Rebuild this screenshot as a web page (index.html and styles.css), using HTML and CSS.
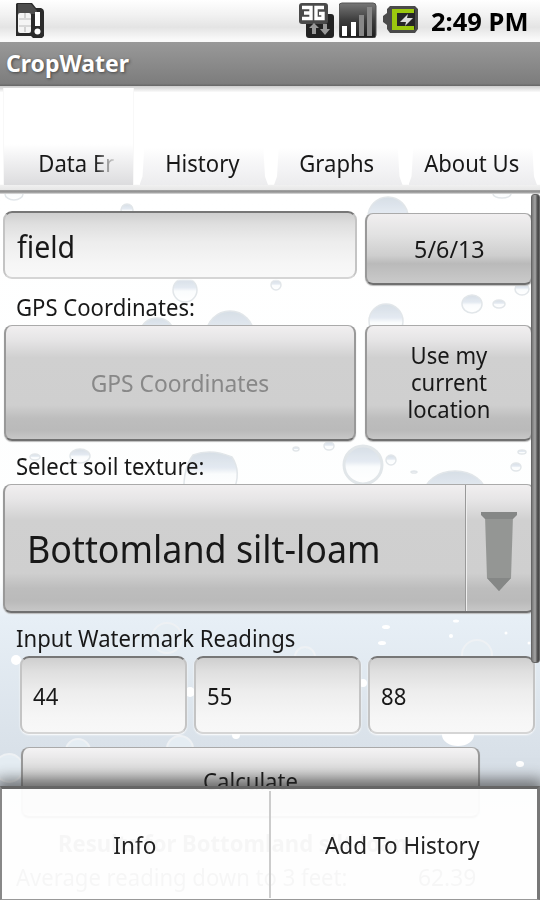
FILE: index.html
```html
<!DOCTYPE html>
<html lang="en">
<head>
<meta charset="utf-8">
<title>CropWater</title>
<link rel="stylesheet" href="styles.css">
</head>
<body>
<div class="screen">
  <header class="status">
    <svg class="sim" width="34" height="38" viewBox="0 0 34 38">
      <path d="M3 3h15l4 5h5q3 1 3 4v24l-2 2H19l-2-2H2V4z" fill="#2b2b2b"/>
      <path d="M4 4h13l6 7v3H4z" fill="#4d4d4d"/>
      <rect x="4" y="13" width="13" height="20" rx="2" fill="#f4f4f4"/>
      <path d="M5 19h12M5 26h12M11 13v5M11 27v5" stroke="#bbb" stroke-width="1.2"/>
      <path d="M21 12h5v14h-5z" fill="#fff"/><circle cx="23.500" cy="31.500" r="3" fill="#fff"/>
    </svg>
    <div class="status-icons">
      <svg width="38" height="38" viewBox="0 0 38 38">
        <rect x="8" y="14" width="28" height="24" rx="3" fill="#222"/>
        <rect x="1" y="3" width="29" height="21" rx="3" fill="#4a4a4a"/>
        <path d="M4 7.500h9v11H4M6 13h6M26 7.500h-8v11h7v-5h-4" fill="none" stroke="#fff" stroke-width="3.400"/>
        <path d="M14 34v-6h-3l5-5 5 5h-3v6zM25 24v5h-3l5 6 5-6h-3v-5z" fill="#999"/>
      </svg>
      <svg width="40" height="38" viewBox="0 0 40 38">
        <defs><linearGradient id="sig" x2="0" y2="1"><stop stop-color="#777"/><stop offset=".5" stop-color="#3c3c3c"/><stop offset="1" stop-color="#1c1c1c"/></linearGradient></defs>
        <rect x="0" y="3" width="37" height="35" rx="3" fill="url(#sig)" stroke="#555"/>
        <path d="M3 26h5v10H3zM12 22h5v14h-5z" fill="#fff"/>
        <path d="M20 15h5v21h-5zM28 7h5v29h-5z" fill="#888"/>
      </svg>
      <svg width="38" height="38" viewBox="0 0 38 38">
        <path d="M8 6h25l3 3v20l-3 4H8l-3-4v-4l-4-3v-6l4-3V9z" fill="#4a4a4a"/>
        <path d="M10 9h21q2 0 2 2v17q0 2-2 2H10z" fill="#262626"/>
        <path d="M10 9h22v4H15v13h17v4H10z" fill="#9bc80e"/>
        <path d="M18 22l8-8-1 4h6l-8 8 1-4z" fill="#ddd"/>
      </svg>
      <span class="clock"><span class="t t-clock">2:49 PM</span></span>
    </div>
  </header>
  <div class="title"><span class="t t-title">CropWater</span></div>
  <nav class="tabs">
    <div class="tab active"><span class="t fade">Data Er</span></div>
    <div class="tab"><span class="t">History</span></div>
    <div class="tab"><span class="t">Graphs</span></div>
    <div class="tab"><span class="t">About Us</span></div>
  </nav>
  <main class="content">
    <svg class="drops" width="540" height="706" viewBox="0 194 540 706">
      <defs>
        <linearGradient id="sky" x2="0" y2="1"><stop stop-color="#fff"/><stop offset=".55" stop-color="#fdfefe"/><stop offset=".6" stop-color="#e7eff6"/><stop offset=".8" stop-color="#d8e0e8"/><stop offset="1" stop-color="#e3e7eb"/></linearGradient>
        <linearGradient id="drop" x2="0" y2="1"><stop stop-color="#d0d9e2"/><stop offset=".4" stop-color="#e0e7f0"/><stop offset=".55" stop-color="#fafcfd"/><stop offset="1" stop-color="#fff"/></linearGradient>
      </defs>
      <rect y="194" width="540" height="706" fill="url(#sky)"/>
      <g class="drop-group" fill="url(#drop)" stroke="#dde2e6" stroke-width="1.500">
        <circle cx="388" cy="217" r="20"/><ellipse cx="14" cy="194" rx="9" ry="6"/><circle cx="127" cy="210" r="6"/><ellipse cx="502" cy="194" rx="9" ry="4"/>
        <circle cx="185" cy="290" r="12"/><circle cx="276" cy="285" r="5"/><circle cx="230" cy="335" r="24"/><ellipse cx="157" cy="331" rx="16" ry="13"/>
        <circle cx="386" cy="321" r="17"/><ellipse cx="472" cy="304" rx="10" ry="9"/><ellipse cx="499" cy="304" rx="6" ry="4"/><ellipse cx="522" cy="289" rx="7" ry="6"/>
        <path d="M193 455q18-7 39 2q10 15 1 35h-49q-1-24 9-37z"/><circle cx="363" cy="465" r="19" stroke-width="3"/><circle cx="391" cy="460" r="5"/><ellipse cx="455" cy="494" rx="31" ry="23"/><ellipse cx="516" cy="467" rx="5" ry="4"/><ellipse cx="522" cy="452" rx="4" ry="2"/><ellipse cx="329" cy="446" rx="5" ry="4"/><ellipse cx="296" cy="449" rx="3" ry="2"/><ellipse cx="414" cy="472" rx="3" ry="1"/><ellipse cx="80" cy="456" rx="10" ry="7"/><ellipse cx="35" cy="457" rx="5" ry="3"/>
      </g>
      <g fill="#e5edf3" stroke="#eef1f4" stroke-width="2">
        <circle cx="167" cy="638" r="15"/><circle cx="477" cy="655" r="15"/><circle cx="305" cy="657" r="10"/><circle cx="78" cy="751" r="12"/><circle cx="180" cy="749" r="13"/><circle cx="9" cy="768" r="14"/>
      </g>
      <g fill="#fff">
        <ellipse cx="386" cy="627" rx="4" ry="2"/><ellipse cx="382" cy="643" rx="4" ry="2"/><ellipse cx="456" cy="621" rx="3" ry="1.500"/><circle cx="451" cy="636" r="2"/><circle cx="506" cy="633" r="1.500"/><circle cx="529" cy="643" r="1.500"/><circle cx="16" cy="660" r="5"/><ellipse cx="458" cy="735" rx="16" ry="11"/><circle cx="190" cy="692" r="5"/><circle cx="363" cy="683" r="4"/><ellipse cx="520" cy="764" rx="4" ry="3"/><circle cx="236" cy="735" r="4"/>
      </g>
    </svg>
    <section class="form">
      <div class="row top-row">
        <div class="input field"><span class="t t-field">field</span></div>
        <div class="button date"><span class="t t-date">5/6/13</span></div>
      </div>
      <div class="label gps-label"><span class="t">GPS Coordinates:</span></div>
      <div class="row gps-row">
        <div class="button gps"><span class="t">GPS Coordinates</span></div>
        <div class="button locate"><span class="t">Use my<br>current<br>location</span></div>
      </div>
      <div class="label"><span class="t">Select soil texture:</span></div>
      <div class="button spinner">
        <span class="choice"><span class="t t-choice">Bottomland silt-loam</span></span>
        <span class="arrow"><svg width="38" height="80" viewBox="0 0 38 80"><path d="M5 4h28L31 66 19 79 7 66z" fill="#949694"/><path d="M1 0h36v3l-4 4H5L1 3z" fill="#858786"/><path d="M7 66h24L19 79z" fill="#858786"/></svg></span>
      </div>
      <div class="label"><span class="t">Input Watermark Readings</span></div>
      <div class="readings">
        <div class="input"><span class="t">44</span></div>
        <div class="input"><span class="t">55</span></div>
        <div class="input"><span class="t">88</span></div>
      </div>
      <div class="button calculate"><span class="t">Calculate</span></div>
      <div class="results"><span class="t">Results for Bottomland silt-loam</span></div>
      <div class="average"><span class="t">Average reading down to 3 feet:</span><span class="t t-value">62.39</span></div>
    </section>
    <div class="scrollbar"></div>
  </main>
  <div class="menu">
    <div class="item"><span class="t">Info</span></div>
    <div class="item"><span class="t">Add To History</span></div>
  </div>
</div>
</body>
</html>
```
FILE: styles.css
```css
* { box-sizing: border-box; }
body { margin: 0; font-family: "Noto Sans", "Open Sans", sans-serif; font-size: 24px; line-height: 34px; color: #181818; }
svg { display: block; flex: none; }
.screen { position: relative; width: 540px; height: 900px; overflow: hidden; background: #fff; display: flex; flex-direction: column; }
.t { display: inline-block; white-space: nowrap; transform: scaleX(.92); transform-origin: left center; }

.status { height: 42px; display: flex; justify-content: space-between; padding: 0 0 0 14px; background: linear-gradient(#fff, #f2f2f2 35%, #e4e4e4 65%, #fafafa 95%); }
.status-icons { display: flex; width: 242px; gap: 3px; }
.clock { padding: 4px 0 0 8px; color: #000; font-size: 25px; font-weight: 700; }
.t-clock { transform: scaleX(1.02); }
.title { height: 44px; padding: 4px 6px; background: linear-gradient(#999, #7d7d7d 94%, #666); color: #fff; font-size: 23px; font-weight: 700; text-shadow: 1px 1px 3px #444; }
.t-title { transform: scaleX(1); }

.tabs { height: 108px; padding: 0 3px; display: flex; gap: 6px; align-items: flex-end; background: linear-gradient(#ccc, #fff 6%, #fff 91%, #f0f0f0 92%, #e7e7e7 96%, #888 97%, #aaa 99%, #eee); }
.tab { flex: 1; height: 42px; margin-bottom: 9px; background: linear-gradient(#fff 10%, #f8f8f9 40%, #ececee); display: flex; justify-content: center; padding-top: 3px; clip-path: polygon(5px 0, calc(100% - 5px) 0, calc(100% - 3px) 80%, 100% 100%, 0 100%, 3px 80%); }
.tab .t { transform-origin: center; margin-left: -3px; }
.tab.active { height: 97px; padding-top: 58px; clip-path: none; background: linear-gradient(#fff 58%, #f4f4f5 70%, #dcdcde); border: solid #f8f8f8; border-width: 0 1px; }
.tab.active .t { margin-left: 17px; }
.fade { background: linear-gradient(90deg, #181818 74%, #ddd); -webkit-background-clip: text; background-clip: text; color: transparent; }

.content { position: relative; height: 706px; }
.drops { position: absolute; left: 0; top: 0; }
.drop-group { opacity: .85; }
.form { position: relative; padding-top: 17px; }
.row { display: flex; }
.top-row { height: 74px; gap: 8px; padding-left: 3px; }
.gps-row { height: 116px; gap: 9px; padding-left: 4px; }
.input { display: flex; align-items: center; border: 2px solid #c4c4c4; border-top-color: #777; border-bottom-color: #d5d5d5; border-radius: 9px; background: linear-gradient(#cfcfcf, #dfdfdf 18%, #ededed 45%, #f6f6f6 80%, #f8f8f8); box-shadow: 0 1px 2px #fff; }
.field { width: 354px; height: 68px; padding: 4px 0 0 12px; font-size: 30px; }
.t-field { transform: scaleX(.95); }
.button { display: flex; align-items: center; justify-content: center; border: 2px solid #999; border-top: 1px solid #aaa; border-bottom-color: #707070; border-radius: 8px; background: linear-gradient(#f1eff0, #e6e5e6 12%, #d0d0d0 28%, #cfcfcf 70%, #bdbdbd 82%, #bababa 92%, #c7c7c7); box-shadow: 0 1px 1px #bbb; }
.button .t { transform-origin: center; }
.date { width: 168px; height: 72px; margin-top: 2px; background: linear-gradient(#f1eff0, #e2e2e2 30%, #cecece 60%, #bababa 72%, #cacaca); }
.date .t-date { transform: scaleX(.97); }
.gps { width: 352px; color: #888; }
.gps .t { transform: scaleX(.95); }
.locate { width: 168px; text-align: center; line-height: 27px; padding-bottom: 2px; }
.label { height: 43px; padding: 8px 0 0 16px; }
.label .t { transform: scaleX(.92); }
.gps-label { height: 40px; padding-top: 5px; }
.spinner { width: 532px; height: 129px; margin-left: 3px; justify-content: space-between; font-size: 38px; line-height: 54px; }
.choice { padding-left: 22px; }
.spinner .t-choice { transform: scaleX(.943); transform-origin: left center; }
.arrow { width: 68px; align-self: stretch; padding: 27px 0 0 14px; border-left: 1px solid #999; box-shadow: inset 1px 0 #eee; }
.readings { display: grid; grid-template-columns: repeat(3, 167px); gap: 7px; padding-left: 20px; height: 78px; }
.readings .input { padding: 2px 0 0 11px; }
.calculate { width: 459px; height: 71px; margin: 13px 0 0 21px; padding-bottom: 2px; background: linear-gradient(#f4f3f4, #dedede 30%, #c8c8c8 60%, #bcbcbc 75%, #ccc); }
.results { height: 34px; padding-left: 58px; margin-top: 8px; font-weight: 700; color: #555; }
.average { display: flex; justify-content: space-between; padding: 0 61px 0 16px; color: #555; }
.t-value { transform: scaleX(.95); }
.scrollbar { position: absolute; right: 0; top: 0; width: 9px; height: 469px; border-radius: 3px; border: 1px solid #666; background: linear-gradient(90deg, #777, #a5a5a5 45%, #555 75%, #444); }

.menu { position: absolute; left: 0; top: 786px; width: 540px; height: 114px; display: flex; gap: 2px; padding: 2px 4px 1px 2px; background: rgba(255, 255, 255, .95); border-top: 3px solid #666; border-left: 2px solid #888; border-right: 3px solid #777; border-bottom: 1px solid #999; box-shadow: 0 -3px 14px 4px rgba(40, 40, 40, .6); }
.item { flex: 1; display: flex; align-items: center; justify-content: center; color: #222; }
.item + .item { border-left: 2px solid #ccc; }
.item .t { transform: scaleX(.94); transform-origin: center; }
```
